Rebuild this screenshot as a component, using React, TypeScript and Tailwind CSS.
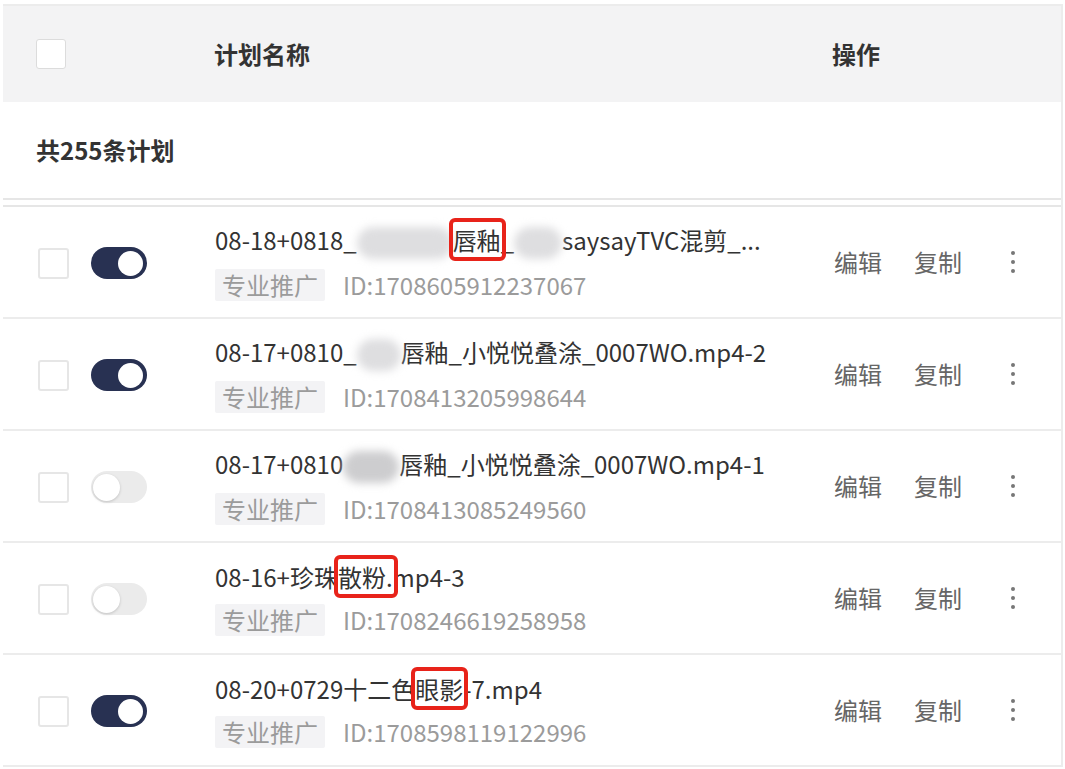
import type { ReactNode } from "react";

type Row = {
  id: string;
  on: boolean;
  title: ReactNode;
};

function Blur({ w, dark }: { w: number; dark?: boolean }) {
  return (
    <span
      className={
        "inline-block align-middle h-[32px] rounded-full blur-[4px] " +
        (dark ? "bg-[#cdcdcf]" : "bg-[#dedee0]")
      }
      style={{ width: w }}
    />
  );
}

function Mark({ children }: { children: ReactNode }) {
  return (
    <span className="relative">
      {children}
      <span className="absolute -left-[4px] -right-[5px] -top-[4px] -bottom-[4px] border-[4px] border-[#e8231a] rounded-[6px]" />
    </span>
  );
}

function Checkbox({ big }: { big?: boolean }) {
  return (
    <div
      className={
        "bg-white rounded-[3px] " +
        (big
          ? "w-[30px] h-[30px] border border-[#dcdcdc]"
          : "w-[31px] h-[31px] border-2 border-[#e6e6e6]")
      }
    />
  );
}

function Toggle({ on }: { on: boolean }) {
  return on ? (
    <div className="w-[56px] h-[32px] rounded-full bg-[#283152] flex items-center justify-end pr-[4px]">
      <div className="w-[25px] h-[25px] rounded-full bg-white" />
    </div>
  ) : (
    <div className="w-[56px] h-[32px] rounded-full bg-[#ebebeb] flex items-center pl-[2px]">
      <div className="w-[27px] h-[27px] rounded-full bg-white shadow-[0_1px_3px_rgba(0,0,0,0.18)]" />
    </div>
  );
}

function Dots() {
  return (
    <div className="w-[24px] flex flex-col items-center gap-[5px]">
      <span className="w-[4px] h-[4px] rounded-full bg-[#777]" />
      <span className="w-[4px] h-[4px] rounded-full bg-[#777]" />
      <span className="w-[4px] h-[4px] rounded-full bg-[#777]" />
    </div>
  );
}

const rows: Row[] = [
  {
    id: "1708605912237067",
    on: true,
    title: (
      <>
        08-18+0818_
        <Blur w={96} />
        <Mark>唇釉</Mark>_<Blur w={48} />
        saysayTVC混剪_...
      </>
    ),
  },
  {
    id: "1708413205998644",
    on: true,
    title: (
      <>
        08-17+0810_
        <Blur w={44} />
        唇釉_小悦悦叠涂_0007WO.mp4-2
      </>
    ),
  },
  {
    id: "1708413085249560",
    on: false,
    title: (
      <>
        08-17+0810
        <Blur w={56} dark />
        唇釉_小悦悦叠涂_0007WO.mp4-1
      </>
    ),
  },
  {
    id: "1708246619258958",
    on: false,
    title: (
      <>
        08-16+珍珠<Mark>散粉.</Mark>mp4-3
      </>
    ),
  },
  {
    id: "1708598119122996",
    on: true,
    title: (
      <>
        08-20+0729十二色<Mark>眼影</Mark>-7.mp4
      </>
    ),
  },
];

export default function App() {
  return (
    <div className="w-[1065px] h-[769px] overflow-hidden bg-white font-['Noto_Sans_CJK_SC','Noto_Sans',sans-serif]">
      <div className="ml-[3px] mt-[4px] w-[1060px] border-t-2 border-r-2 border-[#ececec]">
        <div className="h-[96px] bg-[#f3f3f4] flex items-center text-[24px] font-bold text-[#333]">
          <div className="w-[211px] pl-[33px]">
            <Checkbox big />
          </div>
          <div className="flex-1">计划名称</div>
          <div className="w-[229px]">操作</div>
        </div>

        <div className="h-[98px] flex items-center pl-[33px] text-[24px] font-bold text-[#333] border-b-2 border-[#e6e6e6]">
          共255条计划
        </div>
        <div className="h-[5px]" />

        <div className="border-t-2 border-[#e6e6e6]">
          {rows.map((r) => (
            <div
              key={r.id}
              className="h-[112px] flex items-center border-b-2 border-[#ececec]"
            >
              <div className="w-[212px] pl-[35px] flex items-center gap-[22px] pt-[2px]">
                <Checkbox />
                <Toggle on={r.on} />
              </div>
              <div className="flex-1 flex flex-col">
                <div className="text-[24px] leading-[34px] text-[#333] whitespace-nowrap">
                  {r.title}
                </div>
                <div className="mt-[10px] flex items-center">
                  <span className="h-[32px] px-[7px] bg-[#f3f3f5] rounded-[2px] text-[24px] leading-[32px] text-[#9b9b9b]">
                    专业推广
                  </span>
                  <span className="ml-[18px] text-[24px] leading-[32px] text-[#9b9b9b]">
                    ID:{r.id}
                  </span>
                </div>
              </div>
              <div className="w-[227px] flex items-center text-[24px] text-[#666]">
                <span>编辑</span>
                <span className="ml-[32px]">复制</span>
                <span className="ml-[39px]">
                  <Dots />
                </span>
              </div>
            </div>
          ))}
        </div>
      </div>
    </div>
  );
}
